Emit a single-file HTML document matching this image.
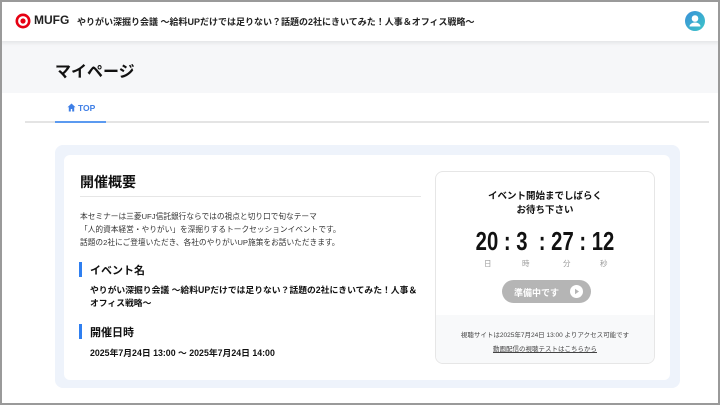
<!DOCTYPE html>
<html><head><meta charset="utf-8"><style>
*{margin:0;padding:0;box-sizing:border-box}
body{width:720px;height:405px;overflow:hidden;font-family:"Liberation Sans","Noto Sans CJK JP",sans-serif;background:#fff;position:relative;color:#111}
.frame{position:absolute;inset:0;border:2px solid #9a9a9a;z-index:10;pointer-events:none}
.hdr{position:absolute;left:0;top:0;width:720px;height:41px;background:#fff;box-shadow:0 2px 4px rgba(0,0,0,.08);z-index:2}
.title{position:absolute;left:0;top:41px;width:720px;height:52px;background:#f6f7f9}
.abs{position:absolute;white-space:nowrap}
</style></head><body>
<div class="frame"></div>
<div class="hdr">
 <svg class="abs" style="left:15px;top:13px" width="16" height="16"><circle cx="8" cy="8" r="6.2" fill="none" stroke="#e60012" stroke-width="2.6"/><circle cx="8" cy="8" r="2.6" fill="#e60012"/></svg>
 <div class="abs" style="left:34px;top:13px;font-size:12px;font-weight:bold;color:#222">MUFG</div>
 <div class="abs" style="left:77px;top:15px;font-size:9px;font-weight:bold;color:#222">やりがい深掘り会議 ～給料UPだけでは足りない？話題の2社にきいてみた！人事＆オフィス戦略～</div>
 <svg class="abs" style="left:685px;top:11px" width="20" height="20"><defs><linearGradient id="g" x1="0" y1="0" x2="1" y2="1"><stop offset="0" stop-color="#3a8fd8"/><stop offset="1" stop-color="#3cc6c8"/></linearGradient></defs><circle cx="10" cy="10" r="10" fill="url(#g)"/><circle cx="10" cy="7.5" r="3.3" fill="#fff"/><path d="M4.5 15.5a5.5 4 0 0 1 11 0z" fill="#fff"/></svg>
</div>
<div class="title"><div class="abs" style="left:55px;top:17px;font-size:16px;font-weight:bold">マイページ</div></div>
<svg class="abs" style="left:67px;top:103px" width="9" height="9"><path d="M4.5 0.5L0.5 4.2h1.3V8.5h2V6h1.4v2.5h2V4.2h1.3z" fill="#3f7fe6"/></svg>
<div class="abs" style="left:78px;top:103px;font-size:8.5px;font-weight:bold;color:#3f7fe6">TOP</div>
<div class="abs" style="left:25px;top:121px;width:684px;height:2px;background:#e4e4e4"></div>
<div class="abs" style="left:55px;top:121px;width:51px;height:2px;background:#5b9af0"></div>

<div class="abs" style="left:55px;top:145px;width:625px;height:243px;background:#eef3fb;border-radius:8px"></div>
<div class="abs" style="left:64px;top:155px;width:606px;height:225px;background:#fff;border-radius:6px"></div>
<div class="abs" style="left:80px;top:172px;font-size:14px;font-weight:bold">開催概要</div>
<div class="abs" style="left:80px;top:196px;width:341px;height:1px;background:#e6e6e6"></div>
<div class="abs" style="left:80px;top:210px;font-size:7.7px;line-height:13px;color:#333">本セミナーは三菱UFJ信託銀行ならではの視点と切り口で旬なテーマ<br>「人的資本経営・やりがい」を深掘りするトークセッションイベントです。<br>話題の2社にご登壇いただき、各社のやりがいUP施策をお話いただきます。</div>
<div class="abs" style="left:79px;top:262px;width:3px;height:15px;background:#2f7ff0"></div>
<div class="abs" style="left:90px;top:262px;font-size:11px;font-weight:bold">イベント名</div>
<div class="abs" style="left:90px;top:284px;font-size:8.8px;line-height:13px;font-weight:bold">やりがい深掘り会議 ～給料UPだけでは足りない？話題の2社にきいてみた！人事＆<br>オフィス戦略～</div>
<div class="abs" style="left:79px;top:324px;width:3px;height:15px;background:#2f7ff0"></div>
<div class="abs" style="left:90px;top:324px;font-size:11px;font-weight:bold">開催日時</div>
<div class="abs" style="left:90px;top:346px;font-size:8.8px;font-weight:bold">2025年7月24日 13:00 ～ 2025年7月24日 14:00</div>

<div class="abs" style="left:435px;top:171px;width:220px;height:193px;border:1px solid #e6e6e6;border-radius:8px;overflow:hidden;background:#fff">
 <div class="abs" style="left:0;top:143px;width:220px;height:50px;background:#f8f9fa"></div>
 <div class="abs" style="left:0;top:18px;width:218px;text-align:center;font-size:9.5px;line-height:14px;font-weight:bold">イベント開始までしばらく<br>お待ち下さい</div>
 <div class="abs" style="left:0;top:54px;width:218px;text-align:center;font-size:26px;font-weight:bold;transform:scaleX(.78)">20 : 3 &nbsp;: 27 : 12</div>
 <div class="abs" style="left:48px;top:86px;font-size:7.5px;color:#999">日</div>
 <div class="abs" style="left:86px;top:86px;font-size:7.5px;color:#999">時</div>
 <div class="abs" style="left:127px;top:86px;font-size:7.5px;color:#999">分</div>
 <div class="abs" style="left:164px;top:86px;font-size:7.5px;color:#999">秒</div>
 <div class="abs" style="left:66px;top:108px;width:89px;height:23px;border-radius:12px;background:#b5b5b5"></div>
 <div class="abs" style="left:78px;top:114px;font-size:9px;font-weight:bold;color:#fff">準備中です</div>
 <svg class="abs" style="left:134px;top:113px" width="13" height="13"><circle cx="6.5" cy="6.5" r="6.5" fill="#fff"/><path d="M5 3.8v5.4l4-2.7z" fill="#b5b5b5"/></svg>
 <div class="abs" style="left:0;top:157px;width:218px;text-align:center;font-size:6.5px;color:#444">視聴サイトは2025年7月24日 13:00 よりアクセス可能です</div>
 <div class="abs" style="left:0;top:171px;width:218px;text-align:center;font-size:6.5px;color:#444;text-decoration:underline">動画配信の視聴テストはこちらから</div>
</div>
</body></html>
